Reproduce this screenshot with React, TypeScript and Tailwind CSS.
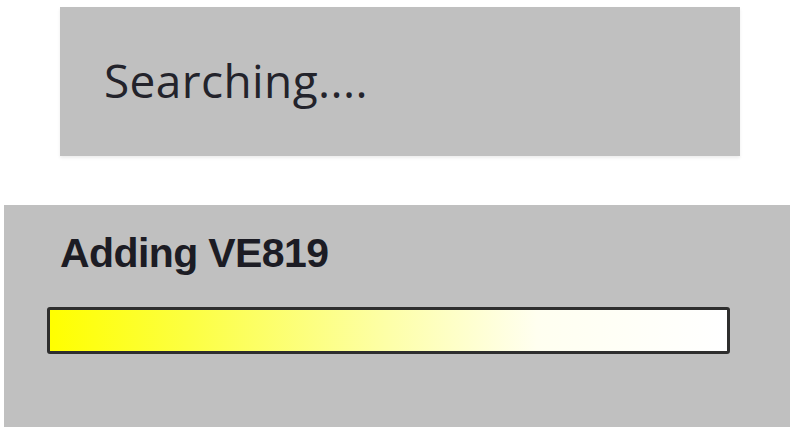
export default function App() {
  return (
    <div className="w-[796px] h-[429px] bg-white overflow-hidden flex flex-col">
      <div className="ml-[60px] mt-[7px] w-[680px] h-[149px] bg-[#c0c0c0] shadow-[0_2px_3px_rgba(0,0,0,0.08)] flex items-center pl-[44px] pb-[4px]">
        <span
          className="text-[#23232b] text-[46px] font-medium leading-none tracking-[0.4px]"
          style={{ fontFamily: '"Open Sans", sans-serif' }}
        >
          Searching....
        </span>
      </div>
      <div className="ml-[4px] mt-[49px] w-[786px] h-[222px] bg-[#c0c0c0] flex flex-col pl-[43px] pt-[28px]">
        <span
          className="text-[#1c1c24] text-[41px] font-bold leading-none ml-[13px] tracking-[-0.6px]"
          style={{ fontFamily: '"Liberation Sans", Arial, sans-serif' }}
        >
          Adding VE819
        </span>
        <div className="mt-[33px] w-[683px] h-[47px] rounded-[3px] border-[3px] border-[#2e2e2e] bg-[linear-gradient(to_right,#ffff00_0%,#fcff40_20%,#fdffa8_50%,#fffff0_72%,#ffffff_100%)]" />
      </div>
    </div>
  );
}
